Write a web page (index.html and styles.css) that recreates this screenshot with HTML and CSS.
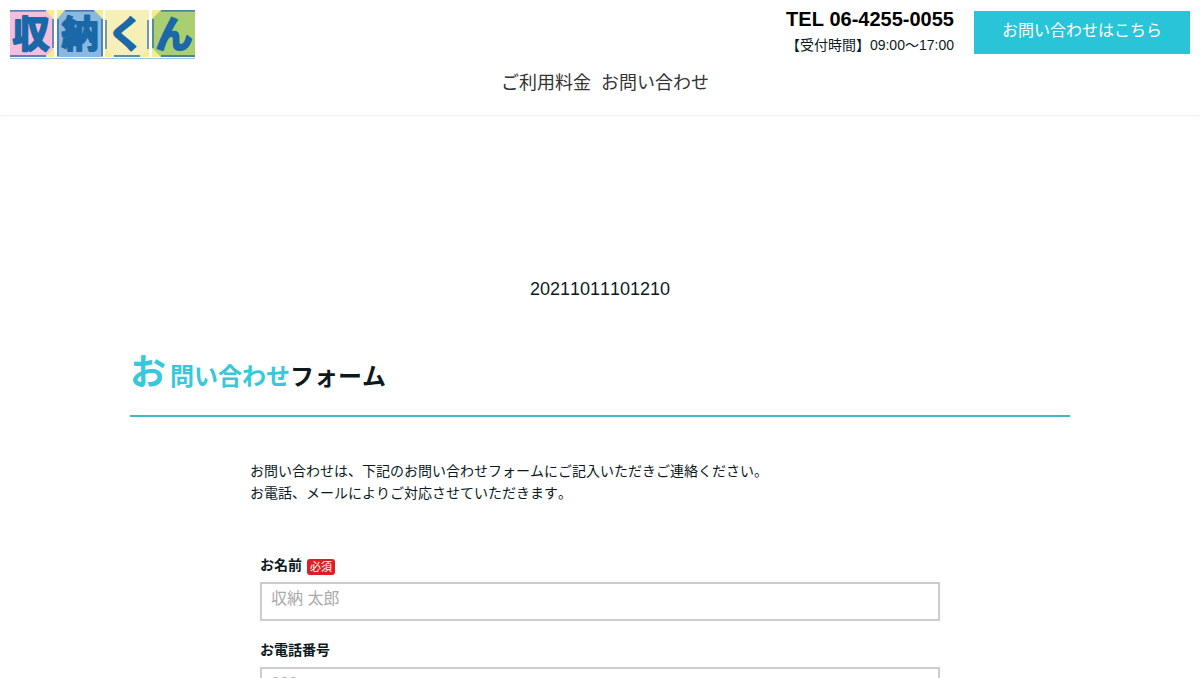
FILE: index.html
```html
<!DOCTYPE html>
<html lang="ja">
<head>
    <meta charset="UTF-8">
    <meta name="viewport" content="width=device-width, initial-scale=1.0">
    <title>お問い合わせ | 収納くん</title>
    <link rel="stylesheet" href="styles.css">
</head>
<body>

    <header class="header">
        <div class="header-top">
            <!-- Logo -->
            <a class="logo" href="#">
                <svg width="185" height="50" viewBox="0 0 185 50" role="img" aria-label="収納くん">
                    <rect x="0" y="0" width="44" height="47" fill="#f4bfdc"/>
                    <rect x="47" y="0" width="46" height="47" fill="#8ab8de"/>
                    <rect x="95" y="0" width="44" height="47" fill="#f7efb8"/>
                    <rect x="142" y="0" width="43" height="47" fill="#a9cf72"/>
                    <path d="M35 0h9v9zM44 38v9h-9zM47 0h8l-8 9zM84 0h9v9zM142 0h9l-9 9zM142 38l9 9h-9zM95 39l8 8h-8zM139 39v8h-8z" fill="#f6ec8c"/>
                    <path d="M0 .8h36M43 9v29M0 46h36M55 .8h29M48 9v37M92 9v37M96 10v29M138 10v29M104 46h26M151 .8h34M143 9v29M151 46h34" fill="none" stroke="#2c6ba3" stroke-width="1.3"/>
                    <path d="M0 48.500h185" stroke="#9cc3df" stroke-width="1"/>
                    <g class="logo-text">
                        <text x="21" y="38">収</text>
                        <text x="70" y="38">納</text>
                        <text x="116" y="38">く</text>
                        <text x="164" y="38">ん</text>
                    </g>
                </svg>
            </a>

            <!-- Phone number and contact button -->
            <div class="header-contact">
                <div class="tel">
                    <div class="tel-number">TEL 06-4255-0055</div>
                    <div class="tel-hours">【受付時間】09:00〜17:00</div>
                </div>
                <a class="contact-button" href="#contact">お問い合わせはこちら</a>
            </div>
        </div>

        <nav class="nav">
            <a href="#">ご利用料金</a>
            <a href="#contact">お問い合わせ</a>
        </nav>
    </header>

    <main class="content">
        <p class="number">20211011101210</p>

        <h1 class="title" id="contact"><span class="title-color"><span class="title-first">お</span>問い合わせ</span>フォーム</h1>

        <div class="contact">
            <p class="lead">
                お問い合わせは、下記のお問い合わせフォームにご記入いただきご連絡ください。<br>
                お電話、メールによりご対応させていただきます。
            </p>

            <form class="form">
                <div class="field">
                    <div class="field-head">
                        <label for="name">お名前</label>
                        <span class="required">必須</span>
                    </div>
                    <input type="text" id="name" name="name" placeholder="収納 太郎" required>
                </div>
                <div class="field">
                    <div class="field-head">
                        <label for="tel">お電話番号</label>
                    </div>
                    <input type="tel" id="tel" name="tel" placeholder="000">
                </div>
            </form>
        </div>
    </main>

</body>
</html>
```

FILE: styles.css
```css
* {
    box-sizing: border-box;
}

body {
    margin: 0;
    font-family: "Liberation Sans", "Noto Sans CJK JP", sans-serif;
    font-size: 14px;
    line-height: 22px;
    font-kerning: none;
    color: #0c1a1e;
    background-color: #fff;
}

a {
    text-decoration: none;
}

/* Header */
.header {
    padding: 10px 10px 20px;
    border-bottom: 1px solid #f2f2f2;
    box-shadow: 0 1px 2px rgba(0, 0, 0, 0.03);
}

.header-top {
    display: flex;
    justify-content: space-between;
    align-items: flex-start;
}

.logo svg {
    display: block;
    overflow: visible;
}

.logo-text {
    font-family: "Noto Sans CJK JP", sans-serif;
    font-size: 37px;
    font-weight: bold;
    text-anchor: middle;
    fill: #1a68a8;
    stroke: #1a68a8;
    stroke-width: 2px;
    stroke-linejoin: round;
}

.header-contact {
    display: flex;
    align-items: flex-start;
    gap: 20px;
}

.tel {
    text-align: right;
}

.tel-number {
    font-size: 20px;
    font-weight: bold;
    line-height: 18px;
    color: #000;
}

.tel-hours {
    margin-top: 6px;
}

.contact-button {
    margin-top: 1px;
    padding: 8px 28px 11px;
    font-size: 16px;
    line-height: 24px;
    color: #fff;
    background-color: #29c4d7;
}

.nav {
    display: flex;
    justify-content: center;
    gap: 10px;
    margin-top: 11px;
    padding-left: 10px;
    font-size: 18px;
    line-height: 24px;
}

.nav a {
    color: #333;
}

/* Page content */
.content {
    max-width: 940px;
    margin: 0 auto;
    padding: 160px 0 40px;
}

.number {
    margin: 0;
    font-size: 18px;
    line-height: 26px;
    text-align: center;
}

.title {
    margin: 45px 0 43px;
    padding-bottom: 12px;
    font-size: 24px;
    line-height: 52px;
    border-bottom: 2px solid #3fb9cb;
}

.title-color {
    color: #38c8db;
}

.title-first {
    margin-right: 4px;
    font-size: 36px;
}

.contact {
    max-width: 700px;
    margin: 0 auto;
}

.lead {
    margin: 0 0 50px;
}

/* Form */
.form {
    padding: 0 10px;
}

.field {
    margin-bottom: 18px;
}

.field-head {
    display: flex;
    align-items: center;
    gap: 5px;
    margin-bottom: 6px;
    font-weight: bold;
}

.required {
    margin-top: 4px;
    padding: 0 3px;
    font-size: 11px;
    font-weight: normal;
    line-height: 16px;
    color: #fff;
    background-color: #dc1f24;
    border-radius: 3px;
}

.field input {
    display: block;
    width: 100%;
    height: 39px;
    padding: 0 9px 6px;
    font-family: inherit;
    font-size: 16px;
    border: 2px solid #ccc;
    border-radius: 0;
}

.field input::placeholder {
    color: #aaa;
}
```
